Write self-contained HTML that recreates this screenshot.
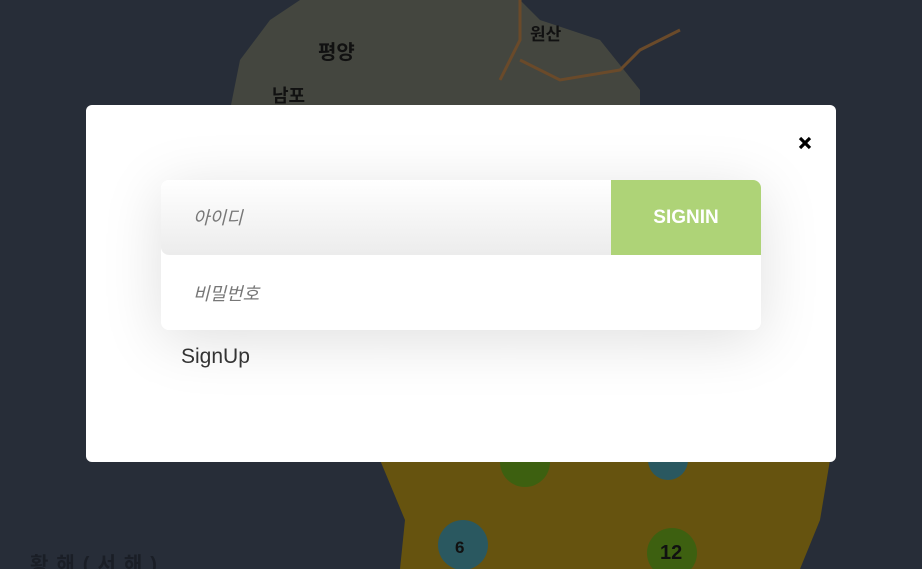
<!DOCTYPE html>
<html><head><meta charset="utf-8"><style>
html,body{margin:0;padding:0;width:922px;height:569px;overflow:hidden}
body{background:#272d38;position:relative;font-family:"Liberation Sans","Noto Sans CJK KR",sans-serif}
.land{position:absolute}
.modal{position:absolute;left:86px;top:105px;width:750px;height:357px;background:#fff;border-radius:6px}
.form{position:absolute;left:75px;top:75px;width:600px;height:150px;border-radius:8px;box-shadow:0 10px 60px rgba(0,0,0,0.13)}
.in{position:absolute;left:0;width:600px;height:75px;border-radius:8px;background:#fff}
.in1{top:0;background:linear-gradient(#fff,#ececec)}
.in2{top:75px}
.ph{position:absolute;left:32px;font-style:italic;color:#777;font-size:18px}
.btn{position:absolute;right:0;top:0;width:150px;height:75px;background:#aed377;border-radius:0 8px 0 0;color:#fff;font-weight:bold;font-size:19px;text-align:center;line-height:75px;font-family:"Liberation Sans Narrow","Liberation Sans",sans-serif}
.su{position:absolute;left:95px;top:240px;font-size:21px;color:#333}
.t{position:absolute;color:#111;font-size:20px;font-weight:bold}
</style></head><body>
<svg class="land" width="922" height="569" style="left:0;top:0">
<path d="M300 0 L520 0 L540 20 L600 40 L640 90 L640 110 L230 110 L240 60 L270 20Z" fill="#44463f"/>
<path d="M380 460 L830 460 L820 520 L800 569 L400 569 L405 520Z" fill="#66530f"/>
<circle cx="463" cy="545" r="25" fill="#2a5860"/>
<circle cx="672" cy="553" r="25" fill="#3d6010"/>
<circle cx="525" cy="462" r="25" fill="#3d6010"/>
<circle cx="668" cy="460" r="20" fill="#2a5860"/>
<path d="M520 0 L520 40 L500 80 M520 60 L560 80 L620 70 L640 50 L680 30" stroke="#6a4a2a" stroke-width="3" fill="none"/>
</svg>
<div class="t" style="left:318px;top:36px">평양</div>
<div class="t" style="left:272px;top:82px;font-size:18px">남포</div>
<div class="t" style="left:530px;top:20px;font-size:17px">원산</div>
<div class="t" style="left:455px;top:538px;font-size:17px">6</div>
<div class="t" style="left:660px;top:542px;font-size:20px">12</div>
<div class="t" style="left:30px;top:548px;color:#1a1e26;font-size:20px;letter-spacing:8px">황해(서해)</div>
<div class="modal">
<svg style="position:absolute;left:712px;top:31px" width="14" height="14" viewBox="0 0 14 14"><path d="M2 2L12 12M12 2L2 12" stroke="#000" stroke-width="3.2"/></svg>
<div class="form">
<div class="in in1"><span class="ph" style="top:24px">아이디</span><div class="btn">SIGNIN</div></div>
<div class="in in2"><span class="ph" style="top:25px">비밀번호</span></div>
</div>
<div class="su">SignUp</div>
</div>
</body></html>
